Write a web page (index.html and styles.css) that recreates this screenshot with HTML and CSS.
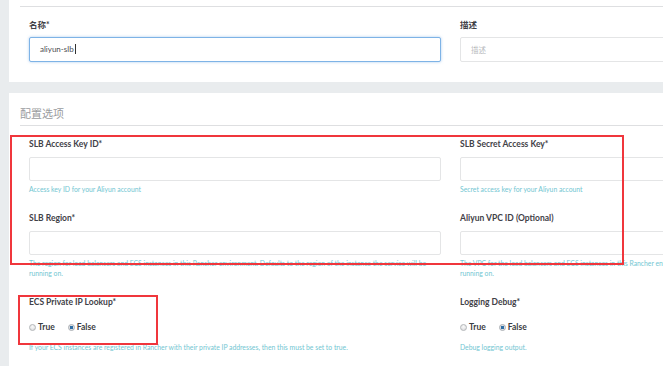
FILE: index.html
```html
<!DOCTYPE html>
<html lang="zh">
<head>
<meta charset="utf-8">
<title>Aliyun SLB</title>
<link rel="stylesheet" href="styles.css">
</head>
<body>
<div class="page">
  <section class="panel panel-top">
    <div class="rule"></div>
    <div class="grid">
      <div class="field">
        <div class="label">名称*</div>
        <div class="input focus">aliyun-slb<span class="caret"></span></div>
      </div>
      <div class="field">
        <div class="label">描述</div>
        <div class="input placeholder">描述</div>
      </div>
    </div>
  </section>

  <section class="panel panel-config">
    <h3 class="heading">配置选项</h3>
    <div class="rule"></div>
    <div class="grid grid-config">
      <div class="field">
        <div class="label">SLB Access Key ID*</div>
        <div class="input"></div>
        <p class="help">Access key ID for your Aliyun account</p>
      </div>
      <div class="field">
        <div class="label">SLB Secret Access Key*</div>
        <div class="input"></div>
        <p class="help">Secret access key for your Aliyun account</p>
      </div>
      <div class="field">
        <div class="label">SLB Region*</div>
        <div class="input"></div>
        <p class="help">The region for load balancers and ECS instances in this Rancher environment. Defaults to the region of the instance the service will be running on.</p>
      </div>
      <div class="field">
        <div class="label">Aliyun VPC ID (Optional)</div>
        <div class="input"></div>
        <p class="help">The VPC for the load balancers and ECS instances in this Rancher environment. Defaults to the VPC of the instance the service will be running on.</p>
      </div>
      <div class="field">
        <div class="label">ECS Private IP Lookup*</div>
        <div class="radios">
          <span class="radio"><span class="dot"></span>True</span>
          <span class="radio"><span class="dot checked"></span>False</span>
        </div>
        <p class="help help-radio">If your ECS instances are registered in Rancher with their private IP addresses, then this must be set to true.</p>
      </div>
      <div class="field">
        <div class="label">Logging Debug*</div>
        <div class="radios">
          <span class="radio"><span class="dot"></span>True</span>
          <span class="radio"><span class="dot checked"></span>False</span>
        </div>
        <p class="help help-radio">Debug logging output.</p>
      </div>
    </div>
  </section>

  <div class="mark mark-a"></div>
  <div class="mark mark-b"></div>
</div>
</body>
</html>
```

FILE: styles.css
```css
html, body {
  margin: 0;
  padding: 0;
}
body {
  background: #e9ecee;
  width: 663px;
  height: 366px;
  overflow: hidden;
  font-family: Lato, "Noto Sans CJK SC", sans-serif;
  color: #3d3f45;
}
.page {
  position: relative;
  padding-left: 9px;
  height: 366px;
}
.panel {
  background: #fff;
  padding-left: 11px;
}
.panel-top {
  padding-top: 6px;
  padding-bottom: 20px;
  margin-bottom: 11px;
}
.panel-config {
  padding-top: 13px;
  height: 260px;
}
.rule {
  height: 1px;
  background: #dedfe1;
}
.heading {
  margin: 0;
  font-size: 11px;
  line-height: 14px;
  font-weight: 400;
  color: #9a9ca0;
  font-family: "Noto Sans CJK SC", sans-serif;
}
.panel-config .rule {
  margin-top: 5px;
}
.grid {
  display: grid;
  grid-template-columns: 412px 412px;
  column-gap: 19px;
  padding-left: 9px;
  margin-top: 12px;
}
.grid-config {
  row-gap: 18px;
}
.label {
  font-size: 8.5px;
  line-height: 12px;
  font-weight: 700;
  color: #3f4147;
  white-space: nowrap;
}
.input {
  box-sizing: border-box;
  height: 24px;
  margin-top: 7px;
  border: 1px solid #e4e5e6;
  border-radius: 2px;
  background: #fff;
  padding-left: 10px;
  font-size: 8px;
  line-height: 22px;
  color: #4a4c50;
}
.panel-top .input {
  height: 25px;
  margin-top: 6px;
  line-height: 23px;
}
.input.focus {
  border-color: #7eb3e6;
  box-shadow: 0 0 3px rgba(102, 163, 224, 0.55);
}
.input.placeholder {
  color: #b9bbbe;
  font-family: "Noto Sans CJK SC", sans-serif;
  font-size: 7.5px;
}
.caret {
  display: inline-block;
  width: 1px;
  height: 10px;
  background: #333;
  vertical-align: -2px;
  margin-left: 1px;
}
.help {
  margin: 3px 0 0;
  font-size: 6.8px;
  line-height: 10px;
  color: #72c6d2;
}
.help-radio {
  margin-top: 9px;
}
.radios {
  display: flex;
  gap: 13px;
  margin-top: 13px;
  height: 12px;
  align-items: center;
}
.radio {
  display: inline-flex;
  align-items: center;
  gap: 2px;
  font-size: 8.5px;
  line-height: 12px;
  font-weight: 700;
  color: #3a3c42;
}
.dot {
  box-sizing: border-box;
  width: 7px;
  height: 7px;
  border-radius: 50%;
  border: 1px solid #b4b6b9;
  background: radial-gradient(circle at 50% 35%, #fafafa, #d6d7d9);
}
.dot.checked {
  background: radial-gradient(circle, #2f6fa6 0 1.6px, #dfe2e5 2px);
  border-color: #a9adb2;
}
.mark {
  position: absolute;
  box-sizing: border-box;
  border: 2px solid #f0363c;
}
.mark-a {
  left: 10px;
  top: 135px;
  width: 614px;
  height: 130px;
}
.mark-b {
  left: 18px;
  top: 295px;
  width: 140px;
  height: 50px;
}
```
